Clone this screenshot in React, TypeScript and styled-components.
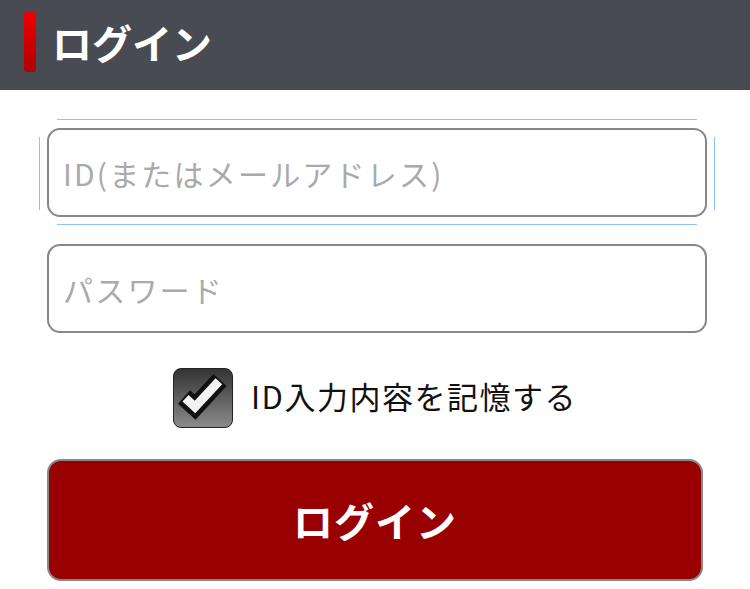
import React from 'react';
import styled, { createGlobalStyle } from 'styled-components';

const GlobalStyle = createGlobalStyle`
  html, body {
    margin: 0;
    padding: 0;
    background: #fff;
    font-family: "Noto Sans CJK JP", "Noto Sans", sans-serif;
  }
`

const Header = styled.header`
  height: 90px;
  background-color: #484b52;
  display: flex;
  align-items: center;
  padding-left: 24px;
  gap: 16px;
  box-sizing: border-box;
`

const RedMark = styled.span`
  display: block;
  width: 12px;
  height: 60px;
  margin-top: -6px;
  border-radius: 3px;
  background: linear-gradient(to bottom, #ee0000, #b00000);
`

const Title = styled.h1`
  margin: 0 0 6px;
  font-size: 40px;
  font-weight: 700;
  color: #fff;
`

const Form = styled.form`
  display: flex;
  flex-direction: column;
  padding: 38px 43px 0 47px;
`

const Field = styled.div<{ $focused?: boolean }>`
  position: relative;
  margin-bottom: 27px;

  &::before {
    content: "";
    display: ${({ $focused }) => ($focused ? 'block' : 'none')};
    position: absolute;
    left: 10px;
    right: 10px;
    top: -9px;
    bottom: -8px;
    border-top: 1px solid #8cc2f5;
    border-bottom: 1px solid #8cc2f5;
    pointer-events: none;
  }

  &::after {
    content: "";
    display: ${({ $focused }) => ($focused ? 'block' : 'none')};
    position: absolute;
    left: -8px;
    right: -8px;
    top: 9px;
    bottom: 7px;
    border-left: 1px solid #8cc2f5;
    border-right: 1px solid #8cc2f5;
    pointer-events: none;
  }
`

const Input = styled.input`
  display: block;
  width: 100%;
  height: 89px;
  box-sizing: border-box;
  border: 2px solid #888;
  border-radius: 13px;
  padding: 0 14px;
  font-family: "Noto Sans CJK JP", "Noto Sans", sans-serif;
  font-size: 30px;
  letter-spacing: 2.2px;
  color: #333;
  background: #fff;
  outline: none;

  &::placeholder {
    color: #aaa;
  }
`

const RememberRow = styled.label`
  display: flex;
  align-items: center;
  justify-content: center;
  gap: 18px;
  margin: 8px 0 0 -4px;
  height: 60px;
  cursor: pointer;
`

const CheckBox = styled.span`
  position: relative;
  display: block;
  flex-shrink: 0;
  width: 60px;
  height: 60px;
  box-sizing: border-box;
  border: 1px solid #222;
  border-radius: 8px;
  background: linear-gradient(to bottom, #333, #8a8a8a);

  svg {
    position: absolute;
    left: -1px;
    top: -1px;
  }
`

const RememberText = styled.span`
  font-size: 31px;
  color: #111;
  letter-spacing: 1.5px;
  padding-bottom: 6px;
`

const SubmitButton = styled.button`
  margin-top: 31px;
  width: 656px;
  height: 122px;
  box-sizing: border-box;
  border: 2px solid #888;
  border-radius: 14px;
  background-color: #990000;
  color: #fff;
  font-family: "Noto Sans CJK JP", "Noto Sans", sans-serif;
  font-size: 40px;
  font-weight: 700;
  letter-spacing: 1px;
  cursor: pointer;
`

const CheckMark = () => (
    <svg width="60" height="60" viewBox="0 0 60 60">
        <polyline
            points="11,29 22,39 47,12"
            fill="none"
            stroke="#111"
            strokeWidth="18"
            strokeLinejoin="miter"
            strokeLinecap="butt"
        />
        <polyline
            points="12.5,30.3 22,39 45.9,13.2"
            fill="none"
            stroke="#f2f2f2"
            strokeWidth="9"
            strokeLinejoin="miter"
            strokeLinecap="butt"
        />
    </svg>
)

const App = () => {
    return (
        <React.Fragment>
            <GlobalStyle/>
            <Header>
                <RedMark/>
                <Title>ログイン</Title>
            </Header>
            <Form onSubmit={e => e.preventDefault()}>
                <Field $focused>
                    <Input type="text" placeholder="ID(またはメールアドレス)"/>
                </Field>
                <Field>
                    <Input type="password" placeholder="パスワード"/>
                </Field>
                <RememberRow>
                    <CheckBox>
                        <CheckMark/>
                    </CheckBox>
                    <RememberText>ID入力内容を記憶する</RememberText>
                </RememberRow>
                <SubmitButton type="submit">ログイン</SubmitButton>
            </Form>
        </React.Fragment>
    );
};

export default App;
